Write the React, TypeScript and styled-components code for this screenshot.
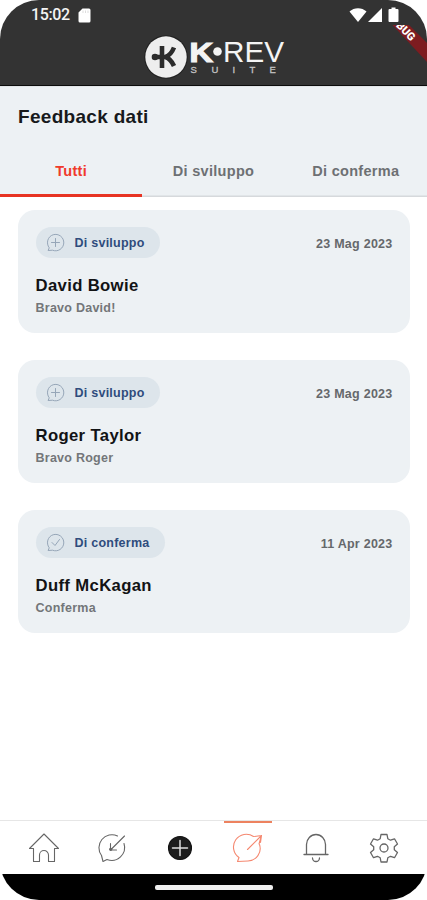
import React from 'react';
import styled, { createGlobalStyle } from 'styled-components';

const Global = createGlobalStyle`
  body { margin: 0; background: #fff; font-family: 'Liberation Sans', Arial, sans-serif; }
  * { box-sizing: border-box; }
`;

const Screen = styled.div`
  position: relative;
  display: flex;
  flex-direction: column;
  width: 427px;
  height: 900px;
  overflow: hidden;
  border-radius: 39px;
  background: #fff;
`;

const Header = styled.header`
  flex: none;
  height: 86px;
  background: #333;
  border-bottom: 1.5px solid #0c0c0c;
`;

const StatusBar = styled.div`
  display: flex;
  align-items: center;
  justify-content: space-between;
  height: 30px;
  padding: 0 28px 0 31px;
`;

const StatusGroup = styled.div`
  display: flex;
  align-items: center;
  gap: 8px;
`;

const Clock = styled.span`
  font: 500 16px/30px Roboto, sans-serif;
  letter-spacing: -0.4px;
  color: #f4f4f4;
`;

const Brand = styled.div`
  display: flex;
  justify-content: center;
  padding-top: 4px;
  svg { display: block; }
`;

const Ribbon = styled.svg`
  position: absolute;
  top: 25px;
  right: 0;
`;

const Top = styled.section`
  flex: none;
  display: flex;
  flex-direction: column;
  justify-content: space-between;
  height: 111px;
  background: #edf1f4;
  border-top: 1px solid #e2e5e8;
`;

const Title = styled.h1`
  margin: 0;
  padding: 19px 18px 0;
  font-size: 19px;
  line-height: 22px;
  letter-spacing: 0.3px;
  color: #17191c;
`;

const Tabs = styled.nav`
  display: grid;
  grid-template-columns: repeat(3, 1fr);
  height: 50px;
  box-shadow: inset 0 -1.5px #d6d9dc;
`;

const Tab = styled.button<{ $active?: boolean }>`
  border: 0;
  border-bottom: 3px solid ${p => (p.$active ? '#e73323' : 'transparent')};
  padding: 2px 0 0;
  background: none;
  font: bold 14.5px/45px 'Liberation Sans', Arial, sans-serif;
  letter-spacing: 0.3px;
  color: ${p => (p.$active ? '#f03a2b' : '#6d7073')};
`;

const List = styled.main`
  flex: 1;
  display: flex;
  flex-direction: column;
  gap: 27px;
  padding: 13px 17px 0 18px;
`;

const Card = styled.article`
  height: 123px;
  border-radius: 17px;
  padding: 17px 17.5px 0;
  background: #edf1f4;
`;

const CardHead = styled.div`
  display: flex;
  justify-content: space-between;
  align-items: center;
  height: 31px;
`;

const Chip = styled.span`
  display: flex;
  align-items: center;
  gap: 10px;
  height: 31px;
  padding: 0 15.5px 0 10px;
  border-radius: 16px;
  background: #dde5eb;
  color: #2f4c7d;
  font-size: 12.5px;
  font-weight: bold;
  letter-spacing: 0.25px;
  svg { flex: none; }
`;

const DateText = styled.time`
  padding-top: 2px;
  font-size: 12.5px;
  font-weight: bold;
  letter-spacing: 0.25px;
  color: #65686b;
`;

const Name = styled.h2`
  margin: 18px 0 0;
  font-size: 16.7px;
  line-height: 20px;
  letter-spacing: 0.35px;
  color: #121315;
`;

const Message = styled.p`
  margin: 4px 0 0;
  font-size: 12.5px;
  line-height: 16px;
  font-weight: bold;
  letter-spacing: 0.25px;
  color: #737679;
`;

const BottomNav = styled.nav`
  flex: none;
  display: grid;
  grid-template-columns: repeat(6, 68px);
  justify-content: center;
  height: 54px;
  border-top: 1px solid #e6e6e6;
  padding: 0 0 0 1px;
`;

const NavItem = styled.button<{ $active?: boolean }>`
  display: flex;
  align-items: center;
  justify-content: center;
  margin: 0 10px;
  padding: 0 0 2px;
  border: 0;
  border-top: 2px solid ${p => (p.$active ? '#ed825f' : 'transparent')};
  background: none;
  color: ${p => (p.$active ? '#f58870' : '#666')};
`;

const SystemBar = styled.footer`
  flex: none;
  display: flex;
  justify-content: center;
  align-items: flex-start;
  height: 26px;
  padding-top: 11px;
  background: #000;
`;

const HomeHandle = styled.div`
  width: 118px;
  height: 5px;
  border-radius: 2px;
  background: #eee;
`;

const Logo = () => (
  <svg width="142" height="46" viewBox="143 34 142 46">
    <circle cx="166" cy="57" r="21.8" fill="#222" />
    <circle cx="166" cy="57" r="20.7" fill="#eee" />
    <g fill="none" stroke="#2c2c2c" strokeWidth="4.6">
      <path d="M162 46v22M156 57h8M174 47.500c-2 5-4.500 8-8.500 9.500 4 1.500 6.500 4.500 8.500 9" />
    </g>
    <circle cx="155" cy="57" r="3.3" fill="#2c2c2c" />
    <text x="189.500" y="61.500" fontSize="28.500" fontWeight="bold" fill="#f4f4f4" stroke="#f4f4f4" strokeWidth="1.200" textLength="23.500" lengthAdjust="spacingAndGlyphs">K</text>
    <circle cx="217.500" cy="51.500" r="4.300" fill="#f4f4f4" />
    <text x="223" y="61.500" fontSize="29" fill="#f4f4f4" textLength="61" lengthAdjust="spacingAndGlyphs">REV</text>
    <text y="73" fontSize="9.500" fill="#c4c4c4" stroke="#c4c4c4" strokeWidth=".3">
      <tspan x="190.500">S</tspan><tspan x="211.500">U</tspan><tspan x="232.500">I</tspan><tspan x="249.500">T</tspan><tspan x="269.500">E</tspan>
    </text>
  </svg>
);

const SdCard = () => (
  <svg width="13" height="15" viewBox="0 0 13 15">
    <path d="M4.500.5H11a1.500 1.500 0 0 1 1.500 1.500v11a1.500 1.500 0 0 1-1.500 1.500H2A1.500 1.500 0 0 1 .5 13V4.500z" fill="#fff" />
    <path d="M5 2.500v2.500M7.500 2.500v2.500M10 2.500v2.500" stroke="#ddd" />
  </svg>
);

const StatusIcons = () => (
  <svg width="50" height="16" viewBox="349 6 50 16">
    <g fill="#fff">
      <path d="M349.500 10.500c4.500-4.500 12.500-4.500 17 0L358 21z" />
      <path d="M382 7v14h-14z" />
      <path d="M389.500 8h2V6.500h4V8h2q1 0 1 1v11q0 1-1 1h-8q-1 0-1-1V9q0-1 1-1z" />
    </g>
  </svg>
);

const ChipIcon = ({ kind }: { kind: Kind }) => (
  <svg width="19" height="19" viewBox="0 0 19 19" fill="none" stroke="#96a6b8" strokeWidth="1" strokeLinecap="round" strokeLinejoin="round">
    <path d="M3 14.500A8.200 8.200 0 1 1 6.500 17.200L2.500 17.500z" />
    {kind === 'Di sviluppo' ? <path d="M9.500 5.500v8M5.500 9.500h8" /> : <path d="M6 9.500l3 3 4.500-6" />}
  </svg>
);

const iconProps = { width: 32, height: 32, viewBox: '0 0 32 32', fill: 'none', stroke: 'currentColor', strokeWidth: 1.1, strokeLinejoin: 'round' as const, strokeLinecap: 'round' as const };

const HomeIcon = () => (
  <svg {...iconProps}><path d="M1.500 16.500 16 2l14.500 14.500h-4V29.500h-6V23a4.500 4.500 0 0 0-9 0v6.500h-6v-13z" /></svg>
);
const ReceivedIcon = () => (
  <svg {...iconProps}>
    <path d="M21.500 4A13 13 0 0 0 5.500 23.500L7 29.500l4-2A13 13 0 0 0 28 11.500M28.500 4 15 17.500M14.500 11.500v6.500H20.500" />
    <circle cx="14.700" cy="17.300" r="1.100" fill="currentColor" />
  </svg>
);
const AddIcon = () => (
  <svg {...iconProps}>
    <circle cx="16" cy="16" r="11.500" fill="#1c1c1c" stroke="#111" />
    <path d="M16 8.500v15M8.500 16h15" stroke="#ddd" strokeWidth="1.500" />
  </svg>
);
const GivenIcon = () => (
  <svg {...iconProps}><path d="M21.500 4.500A12.500 12.500 0 0 0 7 25.500L5.500 29.500 16 29A12.500 12.500 0 0 0 27.500 12.500M15.500 17.500 29.500 3.500M22.500 4.500l7-1-1 7M29.500 3.500 27 12" /></svg>
);
const BellIcon = () => (
  <svg {...iconProps} strokeWidth={1.3}><path d="M4 22.500h24M6.500 22.500V12.500a9.500 10 0 0 1 19 0v10M12.500 26a3.500 3.500 0 0 0 7 0" /></svg>
);
const GearIcon = () => (
  <svg {...iconProps} strokeWidth={1.3}>
    <path d="M13 2.500h6l.8 4.200 2.700 1.500 4-1.400 3 5.200-3.200 2.800v2.900l3.200 2.800-3 5.200-4-1.400-2.700 1.500-.8 4.200h-6l-.8-4.200-2.700-1.500-4 1.400-3-5.200 3.200-2.800v-2.900L2.500 12l3-5.200 4 1.400 2.700-1.500z" />
    <circle cx="16" cy="16" r="4" />
  </svg>
);

type Kind = 'Di sviluppo' | 'Di conferma';
const feedback: { kind: Kind; date: string; name: string; message: string }[] = [
  { kind: 'Di sviluppo', date: '23 Mag 2023', name: 'David Bowie', message: 'Bravo David!' },
  { kind: 'Di sviluppo', date: '23 Mag 2023', name: 'Roger Taylor', message: 'Bravo Roger' },
  { kind: 'Di conferma', date: '11 Apr 2023', name: 'Duff McKagan', message: 'Conferma' },
];

const navItems = [
  { label: 'Home', Icon: HomeIcon },
  { label: 'Ricevuti', Icon: ReceivedIcon },
  { label: 'Nuovo', Icon: AddIcon },
  { label: 'Dati', Icon: GivenIcon, active: true },
  { label: 'Notifiche', Icon: BellIcon },
  { label: 'Impostazioni', Icon: GearIcon },
];

export default function App() {
  return (
    <>
      <Global />
      <Screen>
        <Header>
          <StatusBar>
            <StatusGroup><Clock>15:02</Clock><SdCard /></StatusGroup>
            <StatusIcons />
          </StatusBar>
          <Brand><Logo /></Brand>
        </Header>
        <Ribbon width="40" height="40" viewBox="387 25 40 40">
          <path d="M392.500 25H409l18 18v19z" fill="#7d1c20" />
          <text transform="translate(406 31) rotate(45)" x="0" y="4" textAnchor="middle" fontSize="11" fontWeight="900" fontFamily="Roboto, sans-serif" fill="#fff">BUG</text>
        </Ribbon>
        <Top>
          <Title>Feedback dati</Title>
          <Tabs>
            <Tab $active>Tutti</Tab>
            <Tab>Di sviluppo</Tab>
            <Tab>Di conferma</Tab>
          </Tabs>
        </Top>
        <List>
          {feedback.map(f => (
            <Card key={f.name}>
              <CardHead>
                <Chip><ChipIcon kind={f.kind} />{f.kind}</Chip>
                <DateText>{f.date}</DateText>
              </CardHead>
              <Name>{f.name}</Name>
              <Message>{f.message}</Message>
            </Card>
          ))}
        </List>
        <BottomNav>
          {navItems.map(({ label, Icon, active }) => (
            <NavItem key={label} aria-label={label} $active={active}><Icon /></NavItem>
          ))}
        </BottomNav>
        <SystemBar><HomeHandle /></SystemBar>
      </Screen>
    </>
  );
}
